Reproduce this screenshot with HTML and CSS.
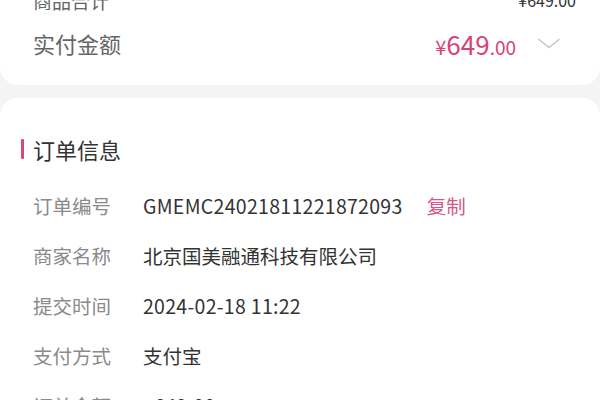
FILE: index.html
```html
<!DOCTYPE html>
<html lang="zh-CN">
<head>
<meta charset="utf-8">
<link rel="stylesheet" href="styles.css">
</head>
<body>
<div class="page">
  <section class="card summary">
    <div class="sum-row first">
      <span class="sum-label">商品合计</span>
      <span class="sum-small">¥649.00</span>
    </div>
    <div class="sum-row second">
      <span class="pay-label">实付金额</span>
      <span class="pay-right">
        <span class="price"><span class="yen">¥</span><span class="int">649</span><span class="dec">.00</span></span>
        <svg class="chev" width="22" height="12" viewBox="0 0 22 12"><path d="M1 1.5 L11 9.5 L21 1.5" fill="none" stroke="#c4c4c4" stroke-width="1.6" stroke-linecap="round" stroke-linejoin="round"/></svg>
      </span>
    </div>
  </section>
  <section class="card info">
    <h2 class="title">订单信息</h2>
    <div class="row"><span class="label">订单编号</span><span class="value latin">GMEMC24021811221872093</span><span class="copy">复制</span></div>
    <div class="row"><span class="label">商家名称</span><span class="value">北京国美融通科技有限公司</span></div>
    <div class="row"><span class="label">提交时间</span><span class="value latin">2024-02-18 11:22</span></div>
    <div class="row"><span class="label">支付方式</span><span class="value">支付宝</span></div>
    <div class="row"><span class="label">订单金额</span><span class="value latin">¥649.00</span></div>
  </section>
</div>
</body>
</html>
```

FILE: styles.css
```css
html, body {
  margin: 0;
  padding: 0;
  background: #f4f4f4;
  font-family: "Noto Sans CJK SC", "Noto Sans", sans-serif;
  overflow: hidden;
}
.page {
  width: 600px;
  height: 400px;
  overflow: hidden;
}
.card {
  background: #ffffff;
}
.summary {
  margin-top: -16px;
  border-radius: 0 0 18px 18px;
  padding: 0 24px 26px 33px;
}
.sum-row {
  display: flex;
  align-items: center;
  justify-content: space-between;
  height: 32px;
}
.sum-row.second {
  margin-top: 11px;
}
.sum-label {
  font-size: 19px;
  color: #666666;
}
.sum-small {
  font-size: 16px;
  color: #333333;
}
.pay-label {
  font-size: 22px;
  color: #666666;
}
.pay-right {
  display: flex;
  align-items: center;
}
.price {
  color: #d8427a;
  display: flex;
  align-items: baseline;
}
.yen {
  font-size: 20px;
}
.int {
  font-size: 26px;
}
.dec {
  font-size: 19px;
}
.chev {
  margin-left: 22px;
  margin-right: 16px;
  margin-top: 2px;
}
.info {
  margin-top: 13px;
  border-radius: 18px 18px 0 0;
  padding: 36px 24px 0 33px;
}
.title {
  margin: 0 0 16px 0;
  height: 30px;
  display: flex;
  align-items: center;
  font-size: 22px;
  font-weight: 400;
  color: #333333;
}
.title::before {
  content: "";
  display: block;
  width: 3px;
  height: 20px;
  background: #d64a79;
  border-radius: 1px;
  margin-left: -12px;
  margin-right: 9px;
}
.row {
  display: flex;
  align-items: center;
  height: 50px;
}
.label {
  width: 110px;
  flex: none;
  font-size: 19.5px;
  color: #8a8a8a;
}
.value {
  font-size: 19.5px;
  color: #333333;
}
.latin {
  letter-spacing: 0.3px;
}
.copy {
  margin-left: 24px;
  font-size: 19.5px;
  color: #d9558a;
}
```
